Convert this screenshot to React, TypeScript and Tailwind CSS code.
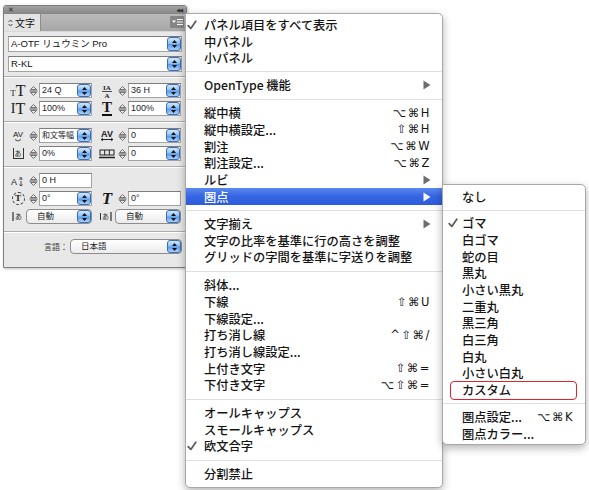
import type { ReactNode } from 'react'

type MenuItem =
  | 'sep'
  | {
      label: string
      check?: boolean
      keys?: string
      sub?: boolean
      active?: boolean
      boxed?: boolean
    }

const mainMenu: MenuItem[] = [
  { label: 'パネル項目をすべて表示', check: true },
  { label: '中パネル' },
  { label: '小パネル' },
  'sep',
  { label: 'OpenType 機能', sub: true },
  'sep',
  { label: '縦中横', keys: '⌥⌘H' },
  { label: '縦中横設定...', keys: '⇧⌘H' },
  { label: '割注', keys: '⌥⌘W' },
  { label: '割注設定...', keys: '⌥⌘Z' },
  { label: 'ルビ', sub: true },
  { label: '圏点', sub: true, active: true },
  'sep',
  { label: '文字揃え', sub: true },
  { label: '文字の比率を基準に行の高さを調整' },
  { label: 'グリッドの字間を基準に字送りを調整' },
  'sep',
  { label: '斜体...' },
  { label: '下線', keys: '⇧⌘U' },
  { label: '下線設定...' },
  { label: '打ち消し線', keys: '^⇧⌘/' },
  { label: '打ち消し線設定...' },
  { label: '上付き文字', keys: '⇧⌘=' },
  { label: '下付き文字', keys: '⌥⇧⌘=' },
  'sep',
  { label: 'オールキャップス' },
  { label: 'スモールキャップス' },
  { label: '欧文合字', check: true },
  'sep',
  { label: '分割禁止' },
]

const subMenu: MenuItem[] = [
  { label: 'なし' },
  'sep',
  { label: 'ゴマ', check: true },
  { label: '白ゴマ' },
  { label: '蛇の目' },
  { label: '黒丸' },
  { label: '小さい黒丸' },
  { label: '二重丸' },
  { label: '黒三角' },
  { label: '白三角' },
  { label: '白丸' },
  { label: '小さい白丸' },
  { label: 'カスタム', boxed: true },
  'sep',
  { label: '圏点設定...', keys: '⌥⌘K' },
  { label: '圏点カラー...' },
]

function Check({ light }: { light?: boolean }) {
  return (
    <svg width="10" height="10" viewBox="0 0 10 10" aria-hidden>
      <path
        d="M1.2 5.6 L3.8 8.4 L8.8 1.2"
        fill="none"
        stroke={light ? '#fff' : '#5a5a5a'}
        strokeWidth="1.7"
        strokeLinecap="round"
        strokeLinejoin="round"
      />
    </svg>
  )
}

function SubArrow({ light }: { light?: boolean }) {
  return (
    <svg width="8" height="10" viewBox="0 0 8 10" aria-hidden>
      <polygon points="0.5,0.5 7.5,5 0.5,9.5" fill={light ? '#fff' : '#6d6d6d'} />
    </svg>
  )
}

function MenuRows({ items, gutter, sepH }: { items: MenuItem[]; gutter: string; sepH: string[] }) {
  let s = 0
  return (
    <>
      {items.map((it, i) => {
        if (it === 'sep') {
          const h = sepH[s++] ?? sepH[0]
          return (
            <div key={i} className={`flex items-center ${h}`}>
              <div className="h-px w-full bg-[#dedede]" />
            </div>
          )
        }
        return (
          <div
            key={i}
            className={`relative flex h-[16.67px] items-center pr-[11px] ${
              it.active
                ? 'bg-[linear-gradient(to_bottom,#5b88ee,#3465e2_50%,#2c5cdc)] text-white'
                : 'text-[#141414]'
            }`}
          >
            <span className={`flex shrink-0 justify-start ${gutter}`}>
              {it.check && <Check light={it.active} />}
            </span>
            <span className="flex-1 whitespace-nowrap">{it.label}</span>
            {it.keys && (
              <span className="font-['DejaVu_Sans','Noto_Sans_CJK_JP',sans-serif] text-[11.5px] tracking-[1.5px]">
                {it.keys}
              </span>
            )}
            {it.sub && <SubArrow light={it.active} />}
            {it.boxed && (
              <span className="absolute left-[7px] right-[8px] top-[-0.5px] bottom-[-1.5px] rounded-[4px] border-[1.5px] border-[#e2212d]" />
            )}
          </div>
        )
      })}
    </>
  )
}

function Aqua() {
  return (
    <div className="flex h-full w-[14px] shrink-0 flex-col items-center justify-center gap-[2px] rounded-[3px] border border-[#3d6cb6] bg-[linear-gradient(to_bottom,#d3e8fc,#8fbff4_45%,#5b9bec_55%,#a9d2fb)]">
      <svg width="5" height="3" viewBox="0 0 5 3" aria-hidden>
        <polygon points="0,3 2.5,0 5,3" fill="#111" />
      </svg>
      <svg width="5" height="3" viewBox="0 0 5 3" aria-hidden>
        <polygon points="0,0 5,0 2.5,3" fill="#111" />
      </svg>
    </div>
  )
}

function Stepper() {
  return (
    <span className="flex w-[11px] shrink-0 justify-center">
      <svg width="9" height="12" viewBox="0 0 9 12" aria-hidden>
        <polygon points="1.5,4.5 4.5,1.5 7.5,4.5" fill="none" stroke="#555" strokeWidth="0.8" />
        <line x1="0.5" y1="6" x2="8.5" y2="6" stroke="#444" strokeWidth="0.9" />
        <polygon points="1.5,7.5 7.5,7.5 4.5,10.5" fill="none" stroke="#555" strokeWidth="0.8" />
      </svg>
    </span>
  )
}

function Field({ value, drop = true, small }: { value: string; drop?: boolean; small?: boolean }) {
  return (
    <div className="flex h-full min-w-0 flex-1 border border-[#a3a3a3] border-t-[#7d7d7d] bg-white">
      <span
        className={`min-w-0 flex-1 overflow-hidden whitespace-nowrap pl-[2px] leading-[13px] text-[#1c1c2c] ${
          small ? 'text-[8px]' : 'text-[9px]'
        }`}
      >
        {value}
      </span>
      {drop && <Aqua />}
    </div>
  )
}

function Popup({ value }: { value: string }) {
  return (
    <div className="flex h-full min-w-0 flex-1 rounded-[4px] border border-[#8d8d8d] bg-[linear-gradient(to_bottom,#ffffff,#ececec)]">
      <span className="flex-1 whitespace-nowrap pl-[10px] text-[8.5px] leading-[13px] text-[#222]">{value}</span>
      <Aqua />
    </div>
  )
}

function Cell({ icon, value, drop, small }: { icon: ReactNode; value: string; drop?: boolean; small?: boolean }) {
  return (
    <div className="flex h-full w-[84px] items-center">
      <span className="flex h-full w-[20px] shrink-0 items-center justify-center font-['Liberation_Serif',serif] text-[#1a1a1a]">
        {icon}
      </span>
      <Stepper />
      <Field value={value} drop={drop} small={small} />
    </div>
  )
}

function PanelSep({ className }: { className: string }) {
  return <div className={`-mx-[4px] h-[2px] border-b border-t border-b-white border-t-[#adadad] ${className}`} />
}

function Row({ children, className = '' }: { children: ReactNode; className?: string }) {
  return <div className={`flex h-[15px] gap-[5px] ${className}`}>{children}</div>
}

function CharPanel() {
  return (
    <div className="ml-[3px] mt-[5px] flex h-[263px] w-[184px] flex-col overflow-hidden rounded-t-[3px] border border-[#7e7e7e] bg-[#e8e8e8] shadow-[1px_1px_3px_rgba(0,0,0,0.25)]">
      {/* title */}
      <div className="flex h-[8px] items-center justify-between bg-[linear-gradient(to_bottom,#a3a3a3,#858585)] px-[4px] leading-none text-[#2e2e2e]">
        <span className="font-['DejaVu_Sans',sans-serif] text-[7px]">✕</span>
        <span className="font-['DejaVu_Sans',sans-serif] text-[5px] tracking-[-1px]">◀◀</span>
      </div>
      {/* tab row */}
      <div className="flex h-[18px] items-end justify-between border-b border-[#d8d8d8] bg-[linear-gradient(to_bottom,#b9b9b9,#a7a7a7)] pr-[2px]">
        <div className="flex h-full w-[37px] items-center gap-[2px] border-r border-[#8c8c8c] bg-[#e4e4e4] pl-[4px] font-['Noto_Sans_CJK_JP',sans-serif] text-[10px] text-[#111]">
          <svg width="5" height="8" viewBox="0 0 5 8" aria-hidden>
            <path d="M0.6 3 L2.5 1 L4.4 3 M0.6 5 L2.5 7 L4.4 5" fill="none" stroke="#333" strokeWidth="0.9" />
          </svg>
          文字
        </div>
        <div className="mb-[3px] flex h-[12px] w-[14px] items-center justify-center rounded-[1px] bg-[#858585]">
          <svg width="11" height="8" viewBox="0 0 11 8" aria-hidden>
            <polygon points="0,2.5 4,2.5 2,5" fill="#fff" />
            <rect x="5" y="1" width="6" height="1" fill="#fff" />
            <rect x="5" y="3.5" width="6" height="1" fill="#fff" />
            <rect x="5" y="6" width="6" height="1" fill="#fff" />
          </svg>
        </div>
      </div>
      {/* body */}
      <div className="flex flex-1 flex-col px-[4px] pt-[4px] font-['Liberation_Sans','Noto_Sans_CJK_JP',sans-serif]">
        <div className="flex h-[16px] border border-[#a3a3a3] border-t-[#7d7d7d] bg-white">
          <span className="flex-1 pl-[2px] text-[9.5px] leading-[14px] text-[#111]">A-OTF リュウミン Pro</span>
          <Aqua />
        </div>
        <div className="mt-[4px] flex h-[16px] border border-[#a3a3a3] border-t-[#7d7d7d] bg-white">
          <span className="flex-1 pl-[2px] text-[9.5px] leading-[14px] text-[#111]">R-KL</span>
          <Aqua />
        </div>
        <PanelSep className="mt-[4px]" />
        <Row className="mt-[5px]">
          <Cell
            value="24 Q"
            icon={
              <span className="flex items-baseline leading-none">
                <span className="text-[9px]">T</span>
                <span className="text-[16px]">T</span>
              </span>
            }
          />
          <Cell
            value="36 H"
            icon={
              <svg width="12" height="14" viewBox="0 0 12 14" aria-hidden>
                <text x="6" y="6" textAnchor="middle" fontSize="7" fontWeight="bold" fontFamily="Liberation Serif" fill="#222">
                  IA
                </text>
                <line x1="1" y1="7.5" x2="11" y2="7.5" stroke="#222" strokeWidth="0.8" />
                <text x="6" y="13.5" textAnchor="middle" fontSize="7" fontWeight="bold" fontFamily="Liberation Serif" fill="#222">
                  A
                </text>
              </svg>
            }
          />
        </Row>
        <Row className="mt-[3px]">
          <Cell
            value="100%"
            icon={
              <span className="flex items-center leading-none">
                <span className="text-[14px]">I</span>
                <span className="text-[16px]">T</span>
              </span>
            }
          />
          <Cell
            value="100%"
            icon={<span className="border-b-2 border-[#111] text-[15px] font-bold leading-[13px]">T</span>}
          />
        </Row>
        <PanelSep className="mt-[5px]" />
        <Row className="mt-[5px]">
          <Cell
            value="和文等幅"
            small
            icon={
              <svg width="14" height="13" viewBox="0 0 14 13" aria-hidden>
                <text x="7" y="8" textAnchor="middle" fontSize="8" fontFamily="Liberation Sans" fill="#222">
                  AV
                </text>
                <path d="M4 10.5 L7 12 L10 10.5" fill="none" stroke="#222" strokeWidth="0.8" />
              </svg>
            }
          />
          <Cell
            value="0"
            icon={
              <svg width="16" height="13" viewBox="0 0 16 13" aria-hidden>
                <text x="8" y="8" textAnchor="middle" fontSize="9" fontWeight="bold" fontFamily="Liberation Sans" fill="#222">
                  AV
                </text>
                <line x1="2" y1="10.5" x2="14" y2="10.5" stroke="#222" strokeWidth="1" />
                <path d="M4 9 L2 10.5 L4 12 M12 9 L14 10.5 L12 12" fill="none" stroke="#222" strokeWidth="0.8" />
              </svg>
            }
          />
        </Row>
        <Row className="mt-[3px]">
          <Cell
            value="0%"
            icon={
              <span className="border-x border-b border-[#333] px-[1px] font-['Noto_Sans_CJK_JP',sans-serif] text-[7px] leading-[10px]">
                あ
              </span>
            }
          />
          <Cell
            value="0"
            icon={
              <svg width="16" height="10" viewBox="0 0 16 10" aria-hidden>
                <rect x="1" y="1" width="14" height="5" fill="none" stroke="#222" />
                <line x1="5.7" y1="1" x2="5.7" y2="6" stroke="#222" />
                <line x1="10.3" y1="1" x2="10.3" y2="6" stroke="#222" />
                <line x1="0" y1="8.5" x2="16" y2="8.5" stroke="#222" strokeWidth="1.5" />
              </svg>
            }
          />
        </Row>
        <PanelSep className="mt-[5px]" />
        <Row className="mt-[5px]">
          <Cell
            value="0 H"
            drop={false}
            icon={
              <svg width="14" height="13" viewBox="0 0 14 13" aria-hidden>
                <text x="0" y="11" fontSize="9" fontFamily="Liberation Sans" fill="#222">
                  A
                </text>
                <text x="8" y="6" fontSize="6" fontFamily="Liberation Sans" fill="#222">
                  a
                </text>
                <path d="M10 7 L10 12 M8.5 10.5 L10 12 L11.5 10.5" fill="none" stroke="#222" strokeWidth="0.8" />
              </svg>
            }
          />
          <div className="w-[84px]" />
        </Row>
        <Row className="mt-[3px]">
          <Cell
            value="0°"
            icon={
              <span className="flex h-[13px] w-[13px] items-center justify-center rounded-full border border-dashed border-[#333] text-[9px] font-bold leading-none">
                T
              </span>
            }
          />
          <Cell value="0°" drop={false} icon={<span className="text-[17px] font-bold italic leading-none">T</span>} />
        </Row>
        <Row className="mt-[3px]">
          <div className="flex h-full w-[84px] items-center">
            <span className="flex w-[18px] shrink-0 items-center justify-center font-['Noto_Sans_CJK_JP',sans-serif] text-[7px] leading-none text-[#222]">
              <span className="mr-[1px] inline-block h-[9px] w-[2px] bg-[#777]" />
              あ
            </span>
            <Popup value="自動" />
          </div>
          <div className="flex h-full w-[84px] items-center">
            <span className="flex w-[18px] shrink-0 items-center justify-center font-['Noto_Sans_CJK_JP',sans-serif] text-[7px] leading-none text-[#222]">
              <span className="border-l border-[#333] pl-[1px]">あ</span>
              <span className="ml-[1px] inline-block h-[9px] w-[2px] bg-[#777]" />
            </span>
            <Popup value="自動" />
          </div>
        </Row>
        <PanelSep className="mt-[7px]" />
        <div className="mt-[6px] flex h-[15px] items-center">
          <span className="w-[62px] pr-[2px] text-right font-['Noto_Sans_CJK_JP',sans-serif] text-[8px] text-[#333]">言語：</span>
          <Popup value="日本語" />
        </div>
      </div>
    </div>
  )
}

export default function App() {
  return (
    <div className="relative h-[490px] w-[589px] overflow-hidden bg-white font-['Noto_Sans_CJK_JP',sans-serif]">
      <CharPanel />

      {/* main panel menu */}
      <div className="absolute left-[185px] top-[13px] w-[258px] rounded-b-[5px] rounded-tr-[5px] border border-[#a8a8a8] bg-white pb-[5px] pt-[3px] text-[12.25px] font-medium shadow-[0_3px_9px_rgba(0,0,0,0.3)]">
        <MenuRows
          items={mainMenu}
          gutter="w-[18px] pl-[1px]"
          sepH={['h-[10px]', 'h-[11.5px]', 'h-[10.7px]', 'h-[11.5px]', 'h-[11px]', 'h-[11px]']}
        />
      </div>

      {/* 圏点 submenu */}
      <div className="absolute left-[442px] top-[184px] w-[144px] rounded-b-[5px] rounded-tr-[5px] border border-[#a8a8a8] bg-white pb-[2px] pt-[4px] text-[12.25px] font-medium shadow-[0_3px_9px_rgba(0,0,0,0.3)]">
        <MenuRows items={subMenu} gutter="w-[19px] pl-[5px]" sepH={['h-[9.5px]', 'h-[10.5px]']} />
      </div>
    </div>
  )
}
